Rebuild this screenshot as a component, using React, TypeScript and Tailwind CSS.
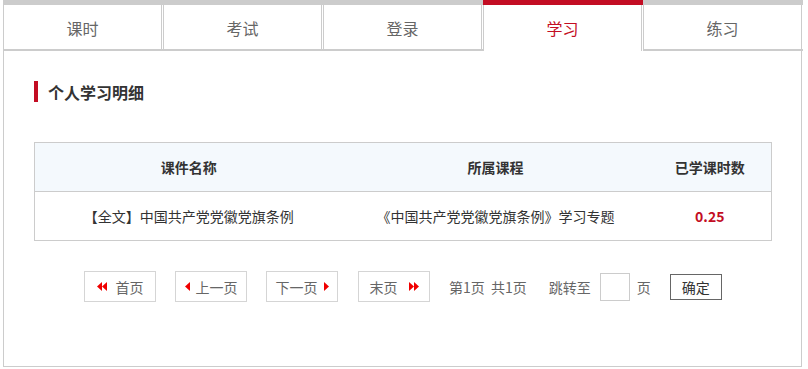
const tabs = ["课时", "考试", "登录", "学习", "练习"];
const activeTab = "学习";

const Tri: React.FC<{ dir: "left" | "right"; double?: boolean }> = ({ dir, double }) => {
  const w = double ? 10 : 5;
  const one = (x: number) =>
    dir === "left" ? `${x + 5},0 ${x + 5},9 ${x},4.5` : `${x},0 ${x},9 ${x + 5},4.5`;
  return (
    <svg width={w} height={9} viewBox={`0 0 ${w} 9`} className="shrink-0">
      <polygon points={one(0)} fill="#f00000" />
      {double && <polygon points={one(5)} fill="#f00000" />}
    </svg>
  );
};

const App: React.FC = () => {
  return (
    <div
      className="ml-[3px] w-[800px] bg-white text-[#333]"
      style={{ fontFamily: '"Noto Sans CJK SC", "Noto Sans", sans-serif' }}
    >
      {/* tabs */}
      <div className="flex">
        {tabs.map((t) => {
          const active = t === activeTab;
          return (
            <div
              key={t}
              className={
                active
                  ? "w-[160px] border-t-[5px] border-[#c30d23]"
                  : "w-[160px] border-t-[5px] border-b-2 border-[#cccccc]"
              }
            >
              <div
                className={
                  active
                    ? "mr-px flex h-[46px] items-center justify-center border-x border-[#cccccc] pb-px text-[16px] leading-none text-[#c30d23]"
                    : "mr-px flex h-[44px] items-center justify-center border-x border-[#cccccc] pt-[2px] text-[16px] leading-none text-[#666]"
                }
              >
                {t}
              </div>
            </div>
          );
        })}
      </div>

      {/* content */}
      <div className="h-[316px] w-[799px] border-x border-b border-[#cccccc] px-[30px] pt-[30px]">
        <div className="flex items-center">
          <div className="h-[21px] w-[4px] bg-[#c30d23]" />
          <h2 className="ml-[10px] text-[16px] font-bold leading-none text-[#333]">个人学习明细</h2>
        </div>

        <table className="mt-[40px] w-[738px] border-collapse text-[14px] leading-none">
          <thead>
            <tr className="h-[49px] bg-[#f4f9fd]">
              <th className="w-[308px] border-y border-l border-[#cccccc] font-bold">课件名称</th>
              <th className="w-[306px] border-y border-[#cccccc] font-bold">所属课程</th>
              <th className="border-y border-r border-[#cccccc] font-bold">已学课时数</th>
            </tr>
          </thead>
          <tbody>
            <tr className="h-[49px]">
              <td className="border-y border-l border-[#cccccc] text-center">【全文】中国共产党党徽党旗条例</td>
              <td className="border-y border-[#cccccc] text-center">《中国共产党党徽党旗条例》学习专题</td>
              <td className="border-y border-r border-[#cccccc] text-center font-bold text-[#c30d23]">0.25</td>
            </tr>
          </tbody>
        </table>

        {/* pager */}
        <div className="mt-[30px] flex items-center pl-[50px] text-[14px] leading-none text-[#666]">
          <div className="flex h-[31px] w-[72px] items-center justify-center gap-[9px] border border-[#d5d5d5]">
            <Tri dir="left" double />
            <span>首页</span>
          </div>
          <div className="ml-[19px] flex h-[31px] w-[72px] items-center justify-center gap-[6px] border border-[#d5d5d5]">
            <Tri dir="left" />
            <span>上一页</span>
          </div>
          <div className="ml-[19px] flex h-[31px] w-[72px] items-center justify-center gap-[6px] border border-[#d5d5d5]">
            <span>下一页</span>
            <Tri dir="right" />
          </div>
          <div className="ml-[20px] flex h-[31px] w-[72px] items-center justify-center gap-[11px] border border-[#d5d5d5]">
            <span>末页</span>
            <Tri dir="right" double />
          </div>
          <span className="ml-[19px]">第1页&nbsp;&nbsp;共1页</span>
          <span className="ml-[22px]">跳转至</span>
          <input className="ml-[9px] h-[28px] w-[30px] border border-[#cccccc] outline-none" />
          <span className="ml-[7px]">页</span>
          <button className="ml-[19px] h-[26px] w-[52px] border border-[#666] text-[14px] leading-none text-[#333]">
            确定
          </button>
        </div>
      </div>
    </div>
  );
};

export default App;
